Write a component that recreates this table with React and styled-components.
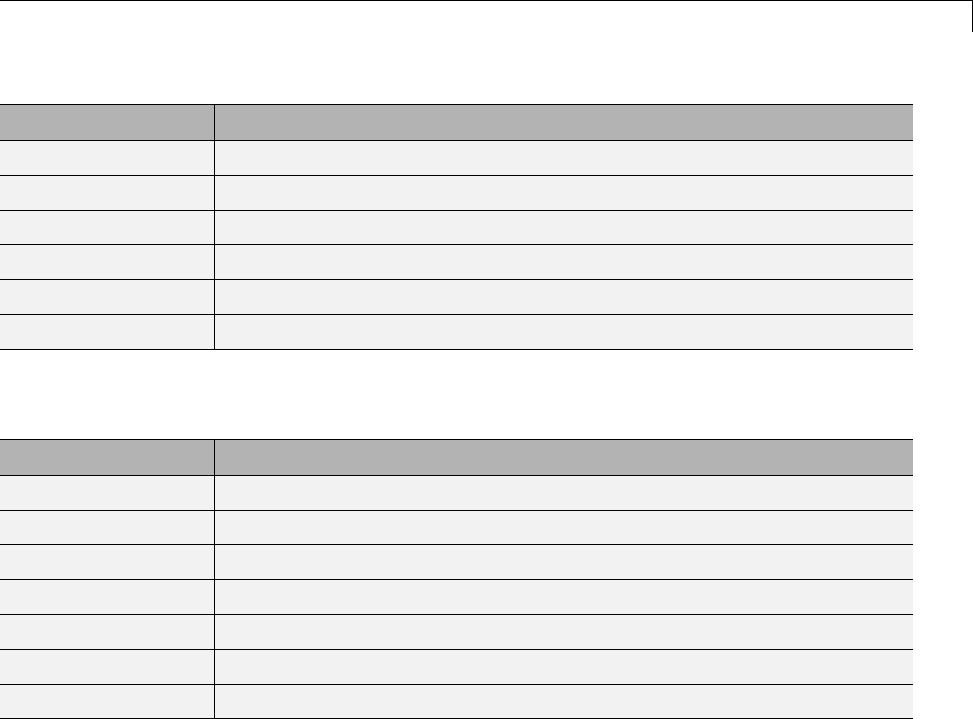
import React from "react";
import styled, { createGlobalStyle } from "styled-components";

const GlobalStyle = createGlobalStyle`
  html, body {
    margin: 0;
    padding: 0;
    background: #ffffff;
    font-family: "Liberation Sans", Arial, sans-serif;
  }
  * {
    box-sizing: border-box;
  }
`;

const Page = styled.div`
  width: 973px;
  display: flex;
  flex-direction: column;
`;

const TopFrame = styled.div`
  height: 32px;
  border-top: 1px solid #000;
  border-right: 1px solid #000;
`;

const Sheet = styled.div`
  width: 913px;
  display: flex;
  flex-direction: column;
  margin-top: ${(props) => props.offset}px;
`;

const Row = styled.div`
  display: flex;
  height: ${(props) => (props.head ? "37px" : "34.8px")};
  background: ${(props) => (props.head ? "#b3b3b3" : "#f2f2f2")};
  border-top: ${(props) => (props.head ? "1px solid #000" : "none")};
  border-bottom: 1px solid #000;
`;

const KeyCell = styled.div`
  width: 215px;
  flex: none;
  border-right: 1px solid #000;
`;

const ValueCell = styled.div`
  flex: 1;
`;

function Table({ rows, offset }) {
  return (
    <Sheet offset={offset}>
      <Row head>
        <KeyCell />
        <ValueCell />
      </Row>
      {Array.from({ length: rows }).map((_, i) => (
        <Row key={`row-${i}`}>
          <KeyCell />
          <ValueCell />
        </Row>
      ))}
    </Sheet>
  );
}

export default function App() {
  return (
    <React.Fragment>
      <GlobalStyle />
      <Page>
        <TopFrame />
        <Table rows={6} offset={72} />
        <Table rows={7} offset={89} />
      </Page>
    </React.Fragment>
  );
}
